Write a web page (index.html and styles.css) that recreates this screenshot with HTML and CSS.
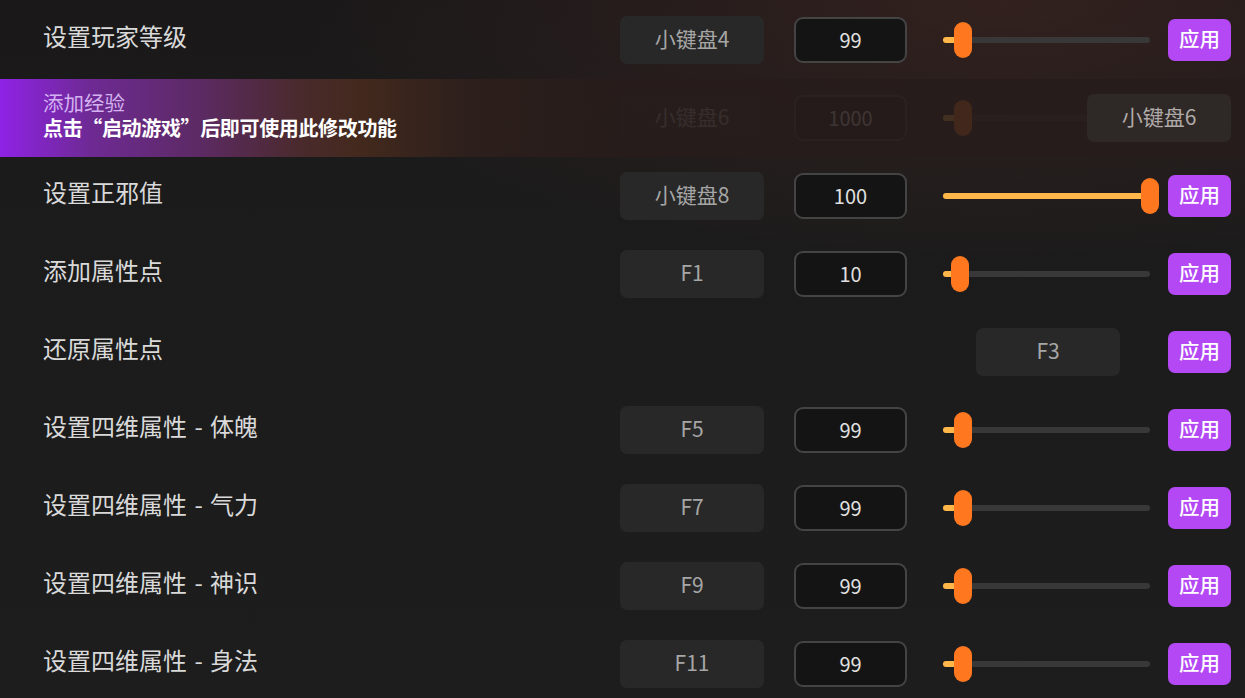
FILE: index.html
```html
<!DOCTYPE html>
<html lang="zh-CN">
<head>
<meta charset="utf-8">
<link rel="stylesheet" href="styles.css">
</head>
<body>
<div class="list">
  <div class="row">
    <div class="label">设置玩家等级</div>
    <div class="key">小键盘4</div>
    <div class="num">99</div>
    <div class="slider"><div class="fill" style="width:9.7%"></div><div class="thumb" style="left:9.7%"></div></div>
    <button class="apply">应用</button>
  </div>
  <div class="row locked">
    <div class="label"></div>
    <div class="faded">
      <div class="key">小键盘6</div>
      <div class="num">1000</div>
      <div class="slider"><div class="fill" style="width:9.7%"></div><div class="thumb" style="left:9.7%"></div></div>
      <div class="apply-space"></div>
    </div>
    <div class="overlay">
      <div class="ov-text">
        <div class="ov-title">添加经验</div>
        <div class="ov-tip">点击“启动游戏”后即可使用此修改功能</div>
      </div>
    </div>
    <div class="key key-top">小键盘6</div>
  </div>
  <div class="row">
    <div class="label">设置正邪值</div>
    <div class="key">小键盘8</div>
    <div class="num">100</div>
    <div class="slider"><div class="fill" style="width:100%"></div><div class="thumb" style="left:100%"></div></div>
    <button class="apply">应用</button>
  </div>
  <div class="row">
    <div class="label">添加属性点</div>
    <div class="key">F1</div>
    <div class="num">10</div>
    <div class="slider"><div class="fill" style="width:8.2%"></div><div class="thumb" style="left:8.2%"></div></div>
    <button class="apply">应用</button>
  </div>
  <div class="row">
    <div class="label">还原属性点</div>
    <div class="key key-wide">F3</div>
    <button class="apply">应用</button>
  </div>
  <div class="row">
    <div class="label">设置四维属性 - 体魄</div>
    <div class="key">F5</div>
    <div class="num">99</div>
    <div class="slider"><div class="fill" style="width:9.7%"></div><div class="thumb" style="left:9.7%"></div></div>
    <button class="apply">应用</button>
  </div>
  <div class="row">
    <div class="label">设置四维属性 - 气力</div>
    <div class="key">F7</div>
    <div class="num">99</div>
    <div class="slider"><div class="fill" style="width:9.7%"></div><div class="thumb" style="left:9.7%"></div></div>
    <button class="apply">应用</button>
  </div>
  <div class="row">
    <div class="label">设置四维属性 - 神识</div>
    <div class="key">F9</div>
    <div class="num">99</div>
    <div class="slider"><div class="fill" style="width:9.7%"></div><div class="thumb" style="left:9.7%"></div></div>
    <button class="apply">应用</button>
  </div>
  <div class="row">
    <div class="label">设置四维属性 - 身法</div>
    <div class="key">F11</div>
    <div class="num">99</div>
    <div class="slider"><div class="fill" style="width:9.7%"></div><div class="thumb" style="left:9.7%"></div></div>
    <button class="apply">应用</button>
  </div>
</div>
</body>
</html>
```

FILE: styles.css
```css
*, *::before, *::after {
  box-sizing: border-box;
}
html, body {
  margin: 0;
  padding: 0;
  height: 100%;
  overflow: hidden;
}
body {
  background:
    radial-gradient(ellipse 700px 260px at 1000px 0px, rgba(70, 40, 35, 0.55), rgba(70, 40, 35, 0) 100%),
    linear-gradient(180deg, #1a1819 0px, #1c1b1b 160px, #1d1d1d 698px);
  font-family: "Noto Sans CJK SC", "Noto Sans", sans-serif;
  color: #d6d6d6;
}
.list {
  padding-top: 1px;
  display: flex;
  flex-direction: column;
}
.row {
  position: relative;
  height: 78px;
  flex: none;
  display: flex;
  align-items: center;
  padding: 0 14px 0 43px;
}
.label {
  flex: 1;
  font-size: 24px;
  line-height: 32px;
  color: #d9d9d9;
  margin-bottom: 8px;
  word-spacing: 2px;
}
.key {
  width: 144px;
  height: 48px;
  flex: none;
  border-radius: 7px;
  background: #282828;
  color: #a6a6a6;
  font-size: 21px;
  display: flex;
  align-items: center;
  justify-content: center;
  padding-bottom: 5px;
  margin-right: 30px;
}
.key-wide {
  margin-right: 48px;
}
.num {
  width: 113px;
  height: 46px;
  flex: none;
  border: 2px solid #444;
  border-radius: 9px;
  background: #141414;
  color: #e0e0e0;
  font-size: 20px;
  display: flex;
  align-items: center;
  justify-content: center;
  padding-bottom: 1px;
  margin-right: 36px;
}
.slider {
  position: relative;
  width: 207px;
  height: 6px;
  flex: none;
  border-radius: 3px;
  background: #383838;
  margin-right: 18px;
}
.fill {
  position: absolute;
  left: 0;
  top: 0;
  bottom: 0;
  border-radius: 3px;
  background: #ffb74a;
}
.thumb {
  position: absolute;
  top: 50%;
  width: 18px;
  height: 36px;
  border-radius: 9px;
  background: #ff7820;
  transform: translate(-50%, -50%);
}
.apply {
  width: 63px;
  height: 42px;
  flex: none;
  border: none;
  border-radius: 7px;
  background: #b348f4;
  color: #fff;
  font-family: "Noto Sans CJK SC", sans-serif;
  font-size: 20.5px;
  font-weight: 500;
  padding: 0 0 5px 0;
}
.apply-space {
  width: 63px;
  height: 42px;
  flex: none;
}
.locked {
  background: linear-gradient(90deg, rgba(40, 28, 26, 0.95), rgba(38, 28, 27, 0.9));
}
.faded {
  display: flex;
  align-items: center;
  opacity: 0.12;
}
.overlay {
  position: absolute;
  inset: 0;
  padding-left: 43px;
  display: flex;
  align-items: center;
  background: linear-gradient(90deg, #8f22e6 0px, #6e2a94 90px, #5c2a63 200px, #4a2a2c 300px, #43291d 360px, #2c1f1c 470px, rgba(38, 28, 27, 0) 620px);
}
.ov-text {
  margin-bottom: 6px;
}
.ov-title {
  font-size: 20.5px;
  color: #d5b2f2;
  line-height: 26px;
}
.ov-tip {
  font-size: 20px;
  font-weight: 700;
  color: #ffffff;
  line-height: 26px;
  letter-spacing: -0.35px;
}
.key-top {
  position: absolute;
  right: 14px;
  top: 15px;
  z-index: 1;
  margin-right: 0;
  background: #2e2826;
  color: #b0aaa8;
}
```
